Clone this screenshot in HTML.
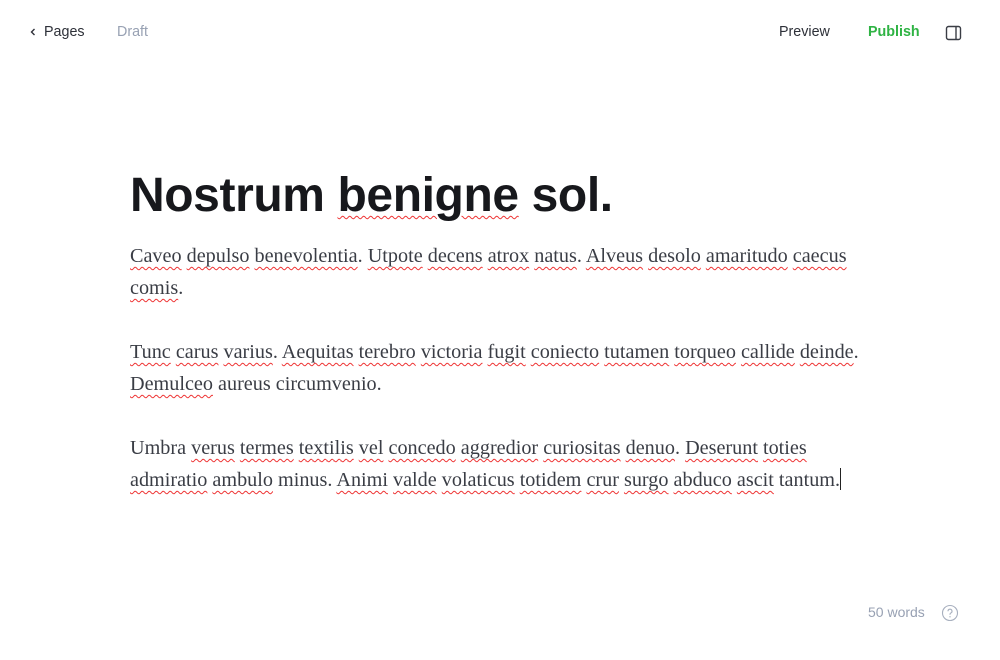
<!DOCTYPE html>
<html><head><meta charset="utf-8"><style>
body{margin:0;width:1000px;height:660px;background:#fff;position:relative;overflow:hidden;font-family:"Liberation Sans",sans-serif}
.h{position:absolute;top:23px;font-size:14.3px;line-height:18px}
h1{position:absolute;left:130px;top:167px;margin:0;font-size:48px;line-height:58px;font-weight:700;color:#17181c;letter-spacing:-0.4px}
.body{position:absolute;left:130px;top:240px;width:745px;font-family:"Liberation Serif",serif;font-size:20.2px;line-height:32px;color:#3a3d45}
p{margin:0 0 32px}
u{text-decoration:underline wavy #e33;text-decoration-thickness:1px;text-underline-offset:4px}
.cur{display:inline-block;width:1px;height:22px;background:#222;vertical-align:-4px}
</style></head><body>
<div class="h" style="left:28px;color:#2d3038"><svg width="10" height="10" viewBox="0 0 10 10" style="vertical-align:-1px;margin-right:6px"><path d="M6.5 2 L3.5 5 L6.5 8" fill="none" stroke="#2d3038" stroke-width="1.4"/></svg>Pages</div>
<div class="h" style="left:117px;color:#98a1b3">Draft</div>
<div class="h" style="left:779px;color:#2d3038">Preview</div>
<div class="h" style="left:868px;color:#2fb344;font-weight:700">Publish</div>
<svg style="position:absolute;left:945px;top:25px" width="18" height="16" viewBox="0 0 18 16"><rect x="1.5" y="1.5" width="14" height="13" rx="2" fill="none" stroke="#3a3d45" stroke-width="1.4"/><line x1="11" y1="1.5" x2="11" y2="14.5" stroke="#3a3d45" stroke-width="1.4"/></svg>
<h1>Nostrum <u>benigne</u> sol.</h1>
<div class="body">
<p><u>Caveo</u> <u>depulso</u> <u>benevolentia</u>. <u>Utpote</u> <u>decens</u> <u>atrox</u> <u>natus</u>. <u>Alveus</u> <u>desolo</u> <u>amaritudo</u> <u>caecus</u> <u>comis</u>.</p>
<p><u>Tunc</u> <u>carus</u> <u>varius</u>. <u>Aequitas</u> <u>terebro</u> <u>victoria</u> <u>fugit</u> <u>coniecto</u> <u>tutamen</u> <u>torqueo</u> <u>callide</u> <u>deinde</u>. <u>Demulceo</u> aureus circumvenio.</p>
<p>Umbra <u>verus</u> <u>termes</u> <u>textilis</u> <u>vel</u> <u>concedo</u> <u>aggredior</u> <u>curiositas</u> <u>denuo</u>. <u>Deserunt</u> <u>toties</u> <u>admiratio</u> <u>ambulo</u> minus. <u>Animi</u> <u>valde</u> <u>volaticus</u> <u>totidem</u> <u>crur</u> <u>surgo</u> <u>abduco</u> <u>ascit</u> tantum.<span class="cur"></span></p>
</div>
<div style="position:absolute;left:868px;top:604px;font-size:14px;color:#98a1b3">50 words</div>
<svg style="position:absolute;left:941px;top:604px" width="18" height="18" viewBox="0 0 18 18"><circle cx="9" cy="9" r="7.5" fill="none" stroke="#a8b0bf" stroke-width="1.1"/><path d="M7 7.2a2 2 0 1 1 2.8 1.8c-.6.3-.8.7-.8 1.3v.4" fill="none" stroke="#a8b0bf" stroke-width="1.1"/><circle cx="9" cy="12.8" r=".7" fill="#a8b0bf"/></svg>
</body></html>
